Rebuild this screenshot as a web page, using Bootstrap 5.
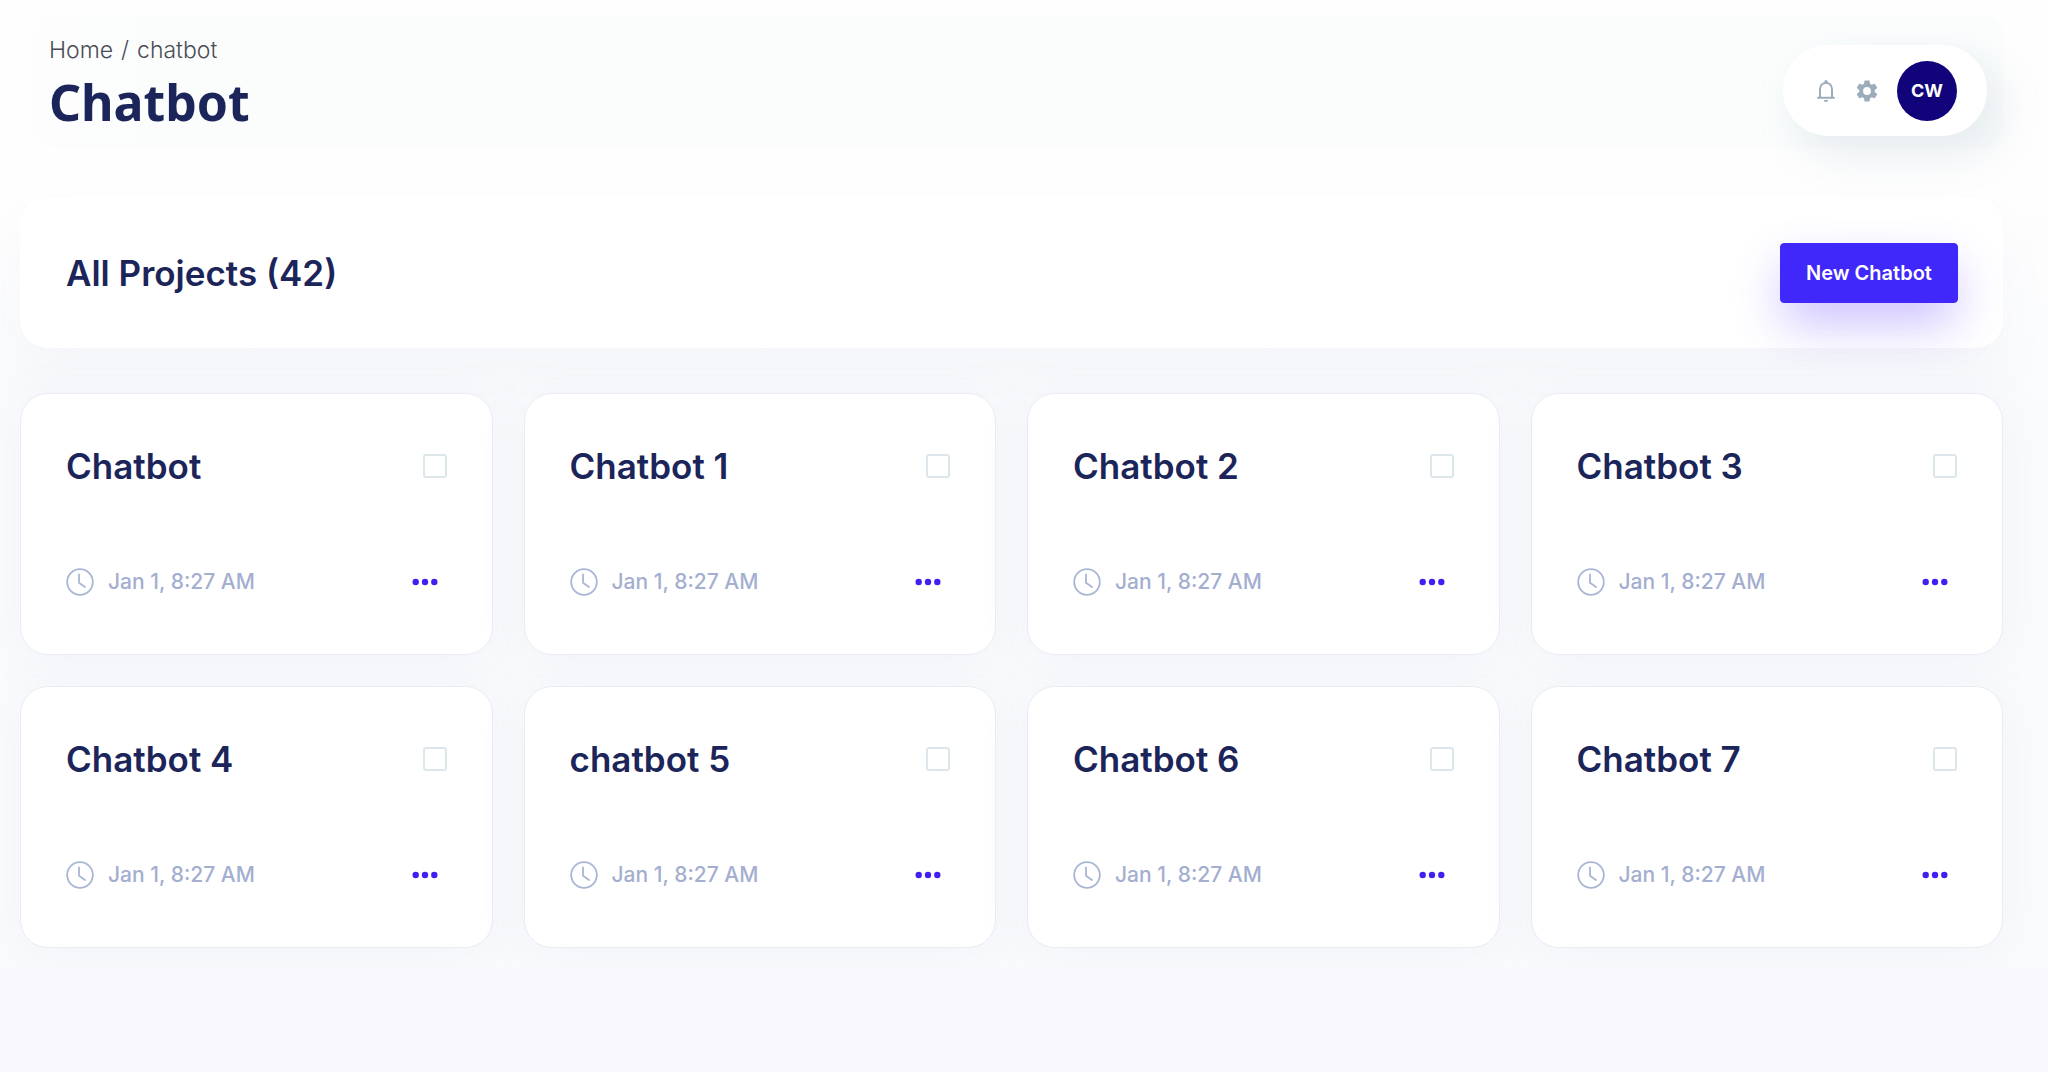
<!DOCTYPE html>
<html lang="en">
<head>
<meta charset="utf-8">
<meta name="viewport" content="width=device-width, initial-scale=1">
<title>Chatbot</title>
<link href="https://cdn.jsdelivr.net/npm/bootstrap@5.3.0/dist/css/bootstrap.min.css" rel="stylesheet">
<style>
  body { background: #f8f8fd; color: #1b2559; font-family: Inter, "Open Sans", sans-serif; }
  .page { background: linear-gradient(#fefefe 180px, #fafbfd 400px); padding: 15px 45px 19px 20px; overflow: hidden; }
  .topbar { background: linear-gradient(90deg, #fdfdfe, #fbfdfd 120px); border-radius: 20px; margin-left: 15px; padding: 18px 16px 11px 14px; min-height: 133px; margin-bottom: 49px; }
  .crumbs { --bs-breadcrumb-divider: "/"; --bs-breadcrumb-item-padding-x: 8px; font-size: 23px; line-height: 34px; font-weight: 300; }
  .crumbs a, .crumbs .active, .crumbs .breadcrumb-item::before { color: #4a4c55; text-decoration: none; }
  .page-title { font-family: "Noto Sans", sans-serif; font-size: 50px; line-height: 70px; font-weight: 700; }
  .tools { background: #fff; border-radius: 46px; padding: 15px 30px 15px 32px; gap: 17px; box-shadow: 14px 17px 40px 4px rgba(112,144,160,.14); margin-top: 12px; height: 91px; }
  .tools svg { display: block; }
  .avatar { width: 60px; height: 60px; background: #11047a; font-size: 18px; font-weight: 700; }
  .panel { background: #fff; border-radius: 28px; box-shadow: 0 6px 50px 4px rgba(112,144,176,.06); }
  .summary { padding: 46px 45px 45px 46px; margin-bottom: 45px; box-shadow: 0 30px 50px rgba(112,144,176,.05); }
  .heading { font-size: 35px; line-height: 44px; font-weight: 600; }
  .btn-new { --bs-btn-bg: #4028fb; --bs-btn-border-color: #4028fb; --bs-btn-color: #fff; --bs-btn-hover-bg: #341ee0; --bs-btn-hover-color: #fff; --bs-btn-border-radius: 4px; --bs-btn-font-size: 20px; --bs-btn-font-weight: 600; --bs-btn-padding-x: 16px; min-width: 178px; height: 60px; box-shadow: 0 22px 50px -4px rgba(80,40,251,.32); }
  .tiles { --bs-gutter-x: 31px; --bs-gutter-y: 31px; }
  .tile { position: relative; border: 1px solid #e9edf3; padding: 50px 45px 57px; }
  .tiles .col { display: grid; }
  .tile .form-check-input { width: 24px; height: 24px; border: 2px solid #dce6eb; border-radius: 3px; margin: 0; }
  .stamp { margin-top: 79px; height: 30px; }
  .stamp time { font-size: 21px; line-height: 30px; color: #a3aed0; font-weight: 500; margin-left: 14px; }
  .more { margin-right: 9px; color: #3f20f0; }
</style>
<script src="https://cdn.jsdelivr.net/npm/bootstrap@5.3.0/dist/js/bootstrap.bundle.min.js"></script>
</head>
<body>
<svg width="0" height="0" class="position-absolute" aria-hidden="true">
  <symbol id="clock" viewBox="0 0 28 28"><g fill="none" stroke="#a9b6d3" stroke-width="1.800" stroke-linecap="round" stroke-linejoin="round"><circle cx="14" cy="14" r="12.800"/><path d="M13 6.500v8.200l6 4.300"/></g></symbol>
  <symbol id="dots" viewBox="0 0 26 8"><g fill="currentColor"><circle cx="3.700" cy="4" r="3.200"/><circle cx="13" cy="4" r="3.200"/><circle cx="22.300" cy="4" r="3.200"/></g></symbol>
</svg>
<main class="page">
  <header class="topbar d-flex justify-content-between align-items-start">
    <div>
      <nav aria-label="breadcrumb">
        <ol class="breadcrumb crumbs mb-0">
          <li class="breadcrumb-item"><a href="#">Home</a></li>
          <li class="breadcrumb-item active" aria-current="page">chatbot</li>
        </ol>
      </nav>
      <h1 class="page-title mb-0">Chatbot</h1>
    </div>
    <div class="tools d-flex align-items-center">
      <button type="button" class="btn p-0 border-0" aria-label="Notifications"><svg width="22" height="24" viewBox="0 0 22 24"><g fill="none" stroke="#9dacba" stroke-width="2"><path d="M5 18.500V10.500C5 6.500 7.500 4 11 4s6 2.500 6 6.500v8"/><path d="M3 18.800h16" stroke-linecap="round"/></g><circle cx="11" cy="2.600" r="1.600" fill="#9dacba"/><path d="M8.800 21h4.400a2.200 2 0 0 1-4.400 0z" fill="#9dacba"/></svg></button>
      <button type="button" class="btn p-0 border-0" aria-label="Settings"><svg width="26" height="26" viewBox="0 0 24 24"><path fill="#9dacba" d="M19.140 12.940c.04-.3.06-.61.06-.94s-.02-.64-.07-.94l2.030-1.580a.49.49 0 0 0 .12-.61l-1.920-3.320a.49.49 0 0 0-.59-.22l-2.390.96a7 7 0 0 0-1.620-.94l-.36-2.540a.48.48 0 0 0-.48-.41h-3.840a.48.48 0 0 0-.47.41l-.36 2.540c-.59.24-1.130.57-1.620.94l-2.390-.96a.48.48 0 0 0-.59.22L2.740 8.870a.48.48 0 0 0 .12.61l2.030 1.580c-.05.3-.09.63-.09.94s.02.64.07.94l-2.030 1.580a.49.49 0 0 0-.12.61l1.920 3.320c.12.22.37.29.59.22l2.390-.96c.5.38 1.030.7 1.620.94l.36 2.540c.05.24.24.41.48.41h3.840c.24 0 .44-.17.47-.41l.36-2.540a7 7 0 0 0 1.620-.94l2.390.96c.22.08.47 0 .59-.22l1.920-3.320a.48.48 0 0 0-.12-.61zM12 15.600a3.600 3.600 0 1 1 0-7.200 3.600 3.600 0 0 1 0 7.200z"/></svg></button>
      <button type="button" class="avatar btn p-0 border-0 rounded-circle text-white">CW</button>
    </div>
  </header>

  <section class="panel summary d-flex justify-content-between align-items-center">
    <h2 class="heading mb-0">All Projects (42)</h2>
    <button type="button" class="btn btn-new">New Chatbot</button>
  </section>

  <section class="row row-cols-4 tiles">
    <div class="col"><article class="panel tile">
      <div class="d-flex justify-content-between align-items-center"><label for="c0" class="heading">Chatbot</label><input class="form-check-input" type="checkbox" id="c0"></div>
      <div class="stamp d-flex align-items-center"><svg width="28" height="28"><use href="#clock"/></svg><time class="me-auto">Jan 1, 8:27 AM</time><button type="button" class="more btn p-0 border-0 d-flex" aria-label="More"><svg width="26" height="8"><use href="#dots"/></svg></button></div>
    </article></div>
    <div class="col"><article class="panel tile">
      <div class="d-flex justify-content-between align-items-center"><label for="c1" class="heading">Chatbot 1</label><input class="form-check-input" type="checkbox" id="c1"></div>
      <div class="stamp d-flex align-items-center"><svg width="28" height="28"><use href="#clock"/></svg><time class="me-auto">Jan 1, 8:27 AM</time><button type="button" class="more btn p-0 border-0 d-flex" aria-label="More"><svg width="26" height="8"><use href="#dots"/></svg></button></div>
    </article></div>
    <div class="col"><article class="panel tile">
      <div class="d-flex justify-content-between align-items-center"><label for="c2" class="heading">Chatbot 2</label><input class="form-check-input" type="checkbox" id="c2"></div>
      <div class="stamp d-flex align-items-center"><svg width="28" height="28"><use href="#clock"/></svg><time class="me-auto">Jan 1, 8:27 AM</time><button type="button" class="more btn p-0 border-0 d-flex" aria-label="More"><svg width="26" height="8"><use href="#dots"/></svg></button></div>
    </article></div>
    <div class="col"><article class="panel tile">
      <div class="d-flex justify-content-between align-items-center"><label for="c3" class="heading">Chatbot 3</label><input class="form-check-input" type="checkbox" id="c3"></div>
      <div class="stamp d-flex align-items-center"><svg width="28" height="28"><use href="#clock"/></svg><time class="me-auto">Jan 1, 8:27 AM</time><button type="button" class="more btn p-0 border-0 d-flex" aria-label="More"><svg width="26" height="8"><use href="#dots"/></svg></button></div>
    </article></div>
    <div class="col"><article class="panel tile">
      <div class="d-flex justify-content-between align-items-center"><label for="c4" class="heading">Chatbot 4</label><input class="form-check-input" type="checkbox" id="c4"></div>
      <div class="stamp d-flex align-items-center"><svg width="28" height="28"><use href="#clock"/></svg><time class="me-auto">Jan 1, 8:27 AM</time><button type="button" class="more btn p-0 border-0 d-flex" aria-label="More"><svg width="26" height="8"><use href="#dots"/></svg></button></div>
    </article></div>
    <div class="col"><article class="panel tile">
      <div class="d-flex justify-content-between align-items-center"><label for="c5" class="heading">chatbot 5</label><input class="form-check-input" type="checkbox" id="c5"></div>
      <div class="stamp d-flex align-items-center"><svg width="28" height="28"><use href="#clock"/></svg><time class="me-auto">Jan 1, 8:27 AM</time><button type="button" class="more btn p-0 border-0 d-flex" aria-label="More"><svg width="26" height="8"><use href="#dots"/></svg></button></div>
    </article></div>
    <div class="col"><article class="panel tile">
      <div class="d-flex justify-content-between align-items-center"><label for="c6" class="heading">Chatbot 6</label><input class="form-check-input" type="checkbox" id="c6"></div>
      <div class="stamp d-flex align-items-center"><svg width="28" height="28"><use href="#clock"/></svg><time class="me-auto">Jan 1, 8:27 AM</time><button type="button" class="more btn p-0 border-0 d-flex" aria-label="More"><svg width="26" height="8"><use href="#dots"/></svg></button></div>
    </article></div>
    <div class="col"><article class="panel tile">
      <div class="d-flex justify-content-between align-items-center"><label for="c7" class="heading">Chatbot 7</label><input class="form-check-input" type="checkbox" id="c7"></div>
      <div class="stamp d-flex align-items-center"><svg width="28" height="28"><use href="#clock"/></svg><time class="me-auto">Jan 1, 8:27 AM</time><button type="button" class="more btn p-0 border-0 d-flex" aria-label="More"><svg width="26" height="8"><use href="#dots"/></svg></button></div>
    </article></div>
  </section>
</main>
</body>
</html>
